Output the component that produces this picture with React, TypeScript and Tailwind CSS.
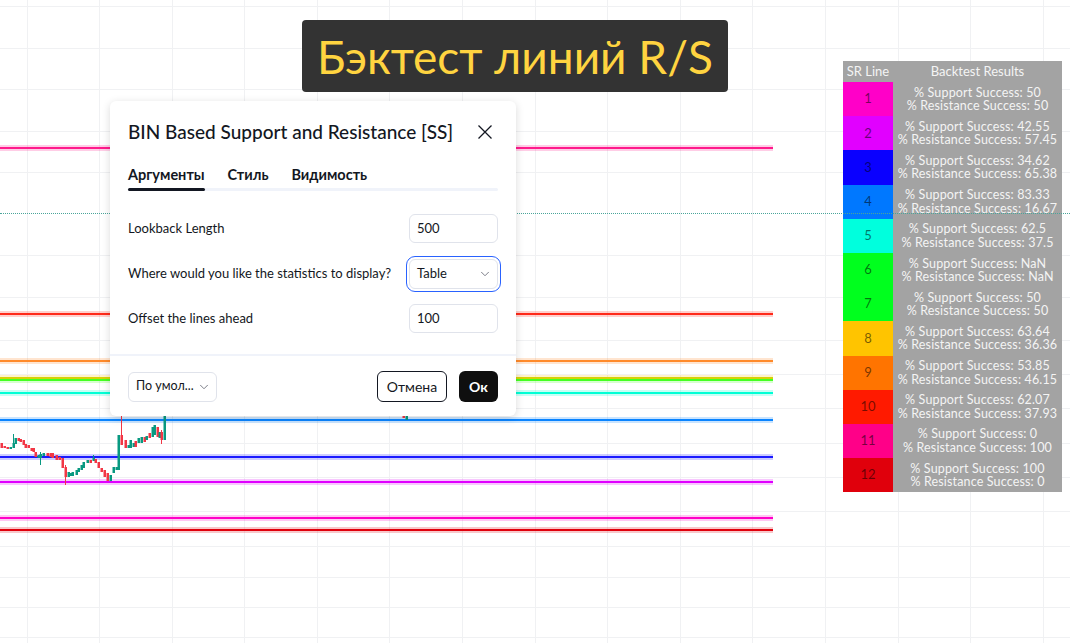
import { ChevronDown } from "lucide-react";

// сетка графика (x вертикальных и y горизонтальных линий)
const vGrid = [27, 99, 172, 244, 317, 389, 462, 535, 607, 680, 752, 825, 898, 970, 1043];
const hGrid = [6, 48, 89, 131, 172, 255, 297, 340, 374, 408, 443, 477, 511, 546, 577, 607, 637];

// уровни R/S, которые рисует индикатор
const levels = [
  { y: 148, c: "#ff1a8c" },
  { y: 314, c: "#ff2a1a" },
  { y: 361, c: "#ff8a2a" },
  { y: 378, c: "#ffc400" },
  { y: 380, c: "#44ff22" },
  { y: 393, c: "#00ffd5" },
  { y: 420, c: "#0a84ff" },
  { y: 457, c: "#1a1aff" },
  { y: 482, c: "#e000ff" },
  { y: 518, c: "#ff00c8" },
  { y: 530, c: "#e0000c" },
];

// свечи: [x, верх тела, низ тела, рост?, верх тени, низ тени]
type Candle = [number, number, number, boolean, number?, number?];
const candles: Candle[] = [
  [1, 443, 448, false], [4, 446, 448, false], [7, 447, 449, false], [10, 447, 449, true],
  [13, 443, 448, true, 434], [15, 438, 444, true], [18, 438, 441, false], [20, 439, 442, false],
  [23, 440, 445, false], [25, 444, 448, false], [28, 445, 448, false], [31, 448, 451, false],
  [33, 448, 452, false], [35, 452, 457, false], [38, 455, 458, true], [40, 454, 458, true, 452, 465],
  [43, 453, 456, true], [47, 453, 456, false], [50, 453, 457, false], [52, 453, 458, false],
  [56, 455, 460, false], [59, 457, 460, false], [62, 458, 468, false], [65, 467, 477, false, 465, 485],
  [68, 472, 477, true], [70, 473, 476, true], [72, 472, 476, true], [76, 470, 475, true],
  [78, 468, 472, true], [81, 465, 470, true], [83, 462, 468, true], [87, 460, 463, true],
  [90, 460, 463, false], [93, 458, 461, true, 455], [95, 459, 463, false], [98, 462, 468, false],
  [101, 468, 472, false], [104, 470, 477, false], [107, 473, 481, false], [110, 475, 481, true],
  [113, 467, 473, true], [116, 467, 470, true], [118, 435, 470, true], [121, 435, 445, false, 415],
  [125, 440, 448, false], [128, 445, 448, true], [130, 440, 448, true], [133, 443, 447, true],
  [135, 441, 447, false], [138, 438, 443, true], [141, 437, 443, true], [144, 437, 442, false],
  [146, 436, 440, true], [149, 433, 438, false], [152, 427, 437, true], [154, 425, 435, true],
  [157, 427, 437, false], [159, 432, 438, true], [161, 432, 440, false, 430, 444], [164, 415, 440, true, 410],
  [403, 410, 418, false], [406, 411, 420, true],
];

// строки таблицы результатов
const rows = [
  { c: "#ff00c8", s: "50", r: "50" },
  { c: "#e100ff", s: "42.55", r: "57.45" },
  { c: "#0a00ff", s: "34.62", r: "65.38" },
  { c: "#0078ff", s: "83.33", r: "16.67" },
  { c: "#00ffdd", s: "62.5", r: "37.5" },
  { c: "#00ff1e", s: "NaN", r: "NaN" },
  { c: "#00ff1e", s: "50", r: "50" },
  { c: "#ffc400", s: "63.64", r: "36.36" },
  { c: "#ff7400", s: "53.85", r: "46.15" },
  { c: "#ff1a00", s: "62.07", r: "37.93" },
  { c: "#ff0088", s: "0", r: "100" },
  { c: "#e0000c", s: "100", r: "0" },
];

function Chart() {
  return (
    <svg className="absolute inset-0" width={1070} height={643}>
      {vGrid.map((x) => (
        <line key={"v" + x} x1={x + 0.5} x2={x + 0.5} y1={0} y2={643} stroke="#f0f1f3" />
      ))}
      {hGrid.map((y) => (
        <line key={"h" + y} x1={0} x2={1070} y1={y + 0.5} y2={y + 0.5} stroke="#f0f1f3" />
      ))}
      {levels.map((l) => (
        <g key={l.y}>
          <rect x={0} y={l.y - 3} width={773} height={6} fill={l.c} opacity={0.22} />
          <rect x={0} y={l.y - 1} width={773} height={2} fill={l.c} />
        </g>
      ))}
      {candles.map(([x, t, b, up, wt, wb], i) => {
        const col = up ? "#089981" : "#f23645";
        return (
          <g key={i}>
            <line x1={x + 0.5} x2={x + 0.5} y1={wt ?? t} y2={wb ?? b} stroke={col} />
            <rect x={x - 0.5} y={t} width={2.5} height={b - t} fill={col} />
          </g>
        );
      })}
    </svg>
  );
}

function Field({ label, value }: { label: string; value: string }) {
  return (
    <div className="flex h-[29px] items-center justify-between">
      <span>{label}</span>
      <div className="flex h-[29px] w-[89px] items-center rounded-[6px] border border-[#e0e3eb] px-[7px]">
        {value}
      </div>
    </div>
  );
}

function Dialog() {
  return (
    <div className="absolute left-[110px] top-[101px] flex w-[406px] flex-col rounded-[6px] bg-white text-[13px] text-[#131722] shadow-[0_2px_8px_rgba(0,0,0,0.15)] font-['Lato','Noto_Sans',sans-serif]">
      <div className="flex h-[62px] items-center justify-between pl-[18px] pr-[23px]">
        <span className="text-[19px] font-medium">BIN Based Support and Resistance [SS]</span>
        <svg width="16" height="16" viewBox="0 0 16 16">
          <path d="M1.5 1.5l13 13M14.5 1.5l-13 13" stroke="#131722" strokeWidth="1.3" />
        </svg>
      </div>

      <div className="px-[18px]">
        <div className="flex h-[24px] items-center gap-[23px] text-[14.5px] font-bold">
          <span>Аргументы</span>
          <span>Стиль</span>
          <span>Видимость</span>
        </div>
        <div className="mt-[1px] h-[3px] rounded-full bg-[#f0f3fa]">
          <div className="h-[3px] w-[77px] rounded-full bg-[#131722]" />
        </div>

        <div className="mt-[23px] flex flex-col gap-[16px]">
          <Field label="Lookback Length" value="500" />
          <div className="flex h-[29px] items-center justify-between">
            <span>Where would you like the statistics to display?</span>
            <div className="flex h-[30px] w-[89px] items-center justify-between rounded-[6px] border border-[#e0e3eb] pl-[7px] pr-[5px] outline outline-offset-[2px] outline-[#2962ff]">
              <span>Table</span>
              <ChevronDown size={14} strokeWidth={1.5} className="text-[#6a6d78]" />
            </div>
          </div>
          <Field label="Offset the lines ahead" value="100" />
        </div>
      </div>

      <div className="mt-[21px] h-[2px] bg-[#f0f3fa]" />

      <div className="flex items-center justify-between px-[18px] pb-[14px] pt-[15px]">
        <div className="flex h-[30px] w-[89px] items-center justify-between whitespace-nowrap rounded-[6px] border border-[#e0e3eb] pl-[7px] pr-[5px] text-[12.5px]">
          <span>По умол...</span>
          <ChevronDown size={14} strokeWidth={1.5} className="text-[#6a6d78]" />
        </div>
        <div className="flex gap-[12px] text-[14px]">
          <button className="flex h-[31px] w-[70px] items-center justify-center rounded-[6px] border border-[#131722]">
            Отмена
          </button>
          <button className="flex h-[31px] w-[39px] items-center justify-center rounded-[6px] bg-[#0f0f0f] font-bold text-white">
            Ок
          </button>
        </div>
      </div>
    </div>
  );
}

function Results() {
  return (
    <div className="absolute left-[843px] top-[61px] w-[219px] bg-[#a3a3a3] text-[12.5px] text-[#f4f4f4] font-['Lato','Noto_Sans',sans-serif]">
      <div className="grid h-[21px] grid-cols-[50px_169px] items-center text-center text-[13px]">
        <span>SR Line</span>
        <span>Backtest Results</span>
      </div>
      {rows.map((r, i) => (
        <div key={i} className="grid h-[34.2px] grid-cols-[50px_169px]">
          <div
            className="flex items-center justify-center text-[13px] text-black/55"
            style={{ backgroundColor: r.c }}
          >
            {i + 1}
          </div>
          <div className="flex flex-col items-center justify-center whitespace-nowrap leading-[13.5px] tracking-[0.15px]">
            <span>% Support Success: {r.s}</span>
            <span>% Resistance Success: {r.r}</span>
          </div>
        </div>
      ))}
    </div>
  );
}

export default function App() {
  return (
    <div className="relative h-[643px] w-[1070px] overflow-hidden bg-white">
      <Chart />

      <div className="absolute left-[302px] top-[20px] flex h-[72px] w-[426px] items-center justify-center rounded-[4px] bg-[#333333] text-[46px] text-[#ffd440] font-['Lato','Noto_Sans',sans-serif]">
        Бэктест линий R/S
      </div>

      <Results />

      {/* пунктир текущей цены проходит поверх таблицы */}
      <div className="absolute left-0 top-[213px] w-full border-t border-dotted border-[#4aa59a]" />

      <Dialog />
    </div>
  );
}
